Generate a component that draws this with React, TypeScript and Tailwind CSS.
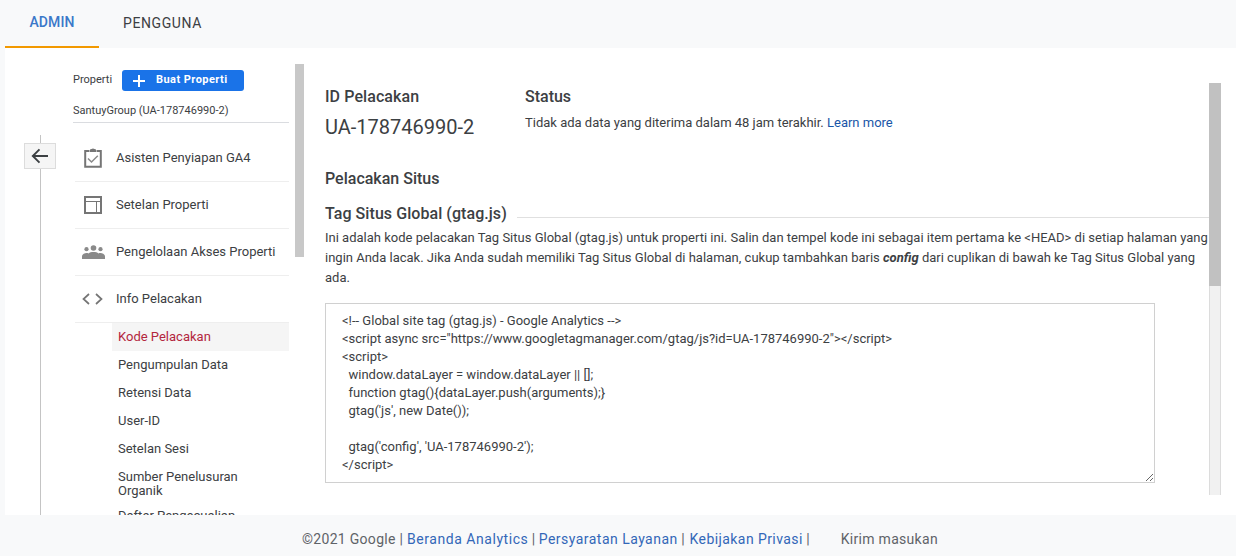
import React from "react";

function AssignIcon() {
  return (
    <svg width="18" height="20" viewBox="0 0 18 20" fill="none">
      <path d="M5.500 3H1.200v15.800h15.600V3h-4.300" stroke="#757575" strokeWidth="2" />
      <path d="M6 1.500l3-1 3 1v2.600H6z" fill="#757575" />
      <path d="M4 10.500l3.500 3.500 6.300-6.300" stroke="#8a8a8a" strokeWidth="1.500" />
    </svg>
  );
}
function LayoutIcon() {
  return (
    <svg width="18" height="18" viewBox="0 0 18 18" fill="none">
      <rect x="1" y="1" width="16" height="16" stroke="#757575" strokeWidth="2" />
      <path d="M1 5.500h16M12.500 5.500V17" stroke="#757575" strokeWidth="1" />
    </svg>
  );
}
function PeopleIcon() {
  return (
    <svg width="23" height="14" viewBox="0 0 23 14" fill="#8a8a8a" className="ml-[1px]">
      <circle cx="11.500" cy="3" r="2.800" />
      <circle cx="4.500" cy="4.200" r="2.100" />
      <circle cx="18.500" cy="4.200" r="2.100" />
      <path d="M0 14v-2.500C0 9.500 2.500 8 4.500 8c.8 0 1.500.1 2 .4C7.600 7.500 9.500 7 11.500 7s3.900.5 5 1.400c.5-.3 1.200-.4 2-.4 2 0 4.500 1.500 4.500 3.500V14z" />
    </svg>
  );
}
function CodeIcon() {
  return (
    <svg width="21" height="12" viewBox="0 0 21 12" fill="none" stroke="#757575" strokeWidth="1.700">
      <path d="M7 1L1.500 6 7 11M14 1l5.500 5-5.500 5" />
    </svg>
  );
}

const menu = [
  { label: "Asisten Penyiapan GA4", icon: <AssignIcon /> },
  { label: "Setelan Properti", icon: <LayoutIcon /> },
  { label: "Pengelolaan Akses Properti", icon: <PeopleIcon /> },
  { label: "Info Pelacakan", icon: <CodeIcon /> },
];

const sub = ["Pengumpulan Data", "Retensi Data", "User-ID", "Setelan Sesi"];

const code = `<!-- Global site tag (gtag.js) - Google Analytics -->
<script async src="https://www.googletagmanager.com/gtag/js?id=UA-178746990-2"></script>
<script>
  window.dataLayer = window.dataLayer || [];
  function gtag(){dataLayer.push(arguments);}
  gtag('js', new Date());

  gtag('config', 'UA-178746990-2');
</script>`;

export default function App() {
  return (
    <div className="w-[1236px] h-[556px] overflow-hidden bg-[#f8f9fa] flex flex-col font-['Roboto',sans-serif] text-[#3c4043]">
      {/* Tabs */}
      <div className="h-[48px] flex pl-[5px] shrink-0">
        <div className="w-[94px] h-[48px] border-b-2 border-[#f29900] flex items-center justify-center text-[14px] font-medium tracking-[0.1px] text-[#3b78c9] pb-[1px]">
          ADMIN
        </div>
        <div className="w-[126px] h-[48px] flex items-center justify-center pl-[1px] text-[14px] text-[#3c4043] pb-[2px] tracking-[0.6px]">
          PENGGUNA
        </div>
      </div>

      <div className="h-[467px] ml-[5px] bg-white flex shrink-0 overflow-hidden">
        {/* Gutter */}
        <div className="w-[68px] shrink-0 flex flex-col items-center pl-[2px] pt-[87px]">
          <div className="w-px h-[8px] bg-[#c4c4c4]" />
          <div className="w-[32px] h-[26px] shrink-0 bg-[#f5f5f5] border border-[#dcdcdc] flex items-center justify-center">
            <svg width="18" height="16" viewBox="0 0 18 16" fill="none" stroke="#3c4043" strokeWidth="1.900">
              <path d="M17 8H2M8.500 1.300L1.800 8l6.700 6.700" />
            </svg>
          </div>
          <div className="w-px flex-1 bg-[#c4c4c4]" />
        </div>

        {/* Sidebar */}
        <div className="w-[216px] shrink-0 overflow-hidden">
          <div className="h-[56px] pt-[22px] flex items-start">
            <span className="text-[11px] leading-[19px] text-[#3c4043] w-[49px]">Properti</span>
            <div className="w-[122px] h-[21px] bg-[#1a73e8] rounded-[3px] flex items-center text-white text-[11px] font-bold tracking-[0.45px] pl-[10px]">
              <svg width="14" height="14" viewBox="0 0 14 14" stroke="white" strokeWidth="2" className="mr-[10px]">
                <path d="M7 1v12M1 7h12" />
              </svg>
              Buat Properti
            </div>
          </div>
          <div className="text-[11px] leading-[14px] text-[#3c4043] border-b border-[#dadce0] pb-[4px]">
            SantuyGroup (UA-178746990-2)
          </div>

          <div className="mt-[12px] ml-[2px]">
            {menu.map((m) => (
              <div key={m.label} className="h-[47px] border-b border-[#eeeeee] flex items-center">
                <div className="w-[41px] flex justify-center pr-[6px] shrink-0">{m.icon}</div>
                <span className="text-[13px] text-[#3c4043]">{m.label}</span>
              </div>
            ))}
          </div>

          <div className="ml-[39px]">
            <div className="h-[28px] bg-[#f5f5f5] flex items-center pl-[6px] text-[13px] text-[#b3263d]">
              Kode Pelacakan
            </div>
            {sub.map((s) => (
              <div key={s} className="h-[28px] flex items-center pl-[6px] text-[13px] text-[#3c4043]">
                {s}
              </div>
            ))}
            <div className="pl-[6px] pt-[7px] text-[13px] leading-[14px] text-[#3c4043] w-[160px]">
              Sumber Penelusuran Organik
            </div>
            <div className="pl-[6px] pt-[11px] text-[13px] leading-[14px] text-[#3c4043]">
              Daftar Pengecualian
            </div>
          </div>
        </div>

        {/* Sidebar scrollbar */}
        <div className="w-[6px] shrink-0" />
        <div className="w-[9px] h-[193px] mt-[16px] bg-[#c8c8c8] shrink-0" />

        {/* Content */}
        <div className="w-[905px] shrink-0 pl-[21px] pt-[39px]">
          <div className="flex h-[78px]">
            <div className="w-[200px]">
              <div className="text-[16px] leading-[19px] font-medium tracking-[0.08px] text-[#3c4043]">ID Pelacakan</div>
              <div className="text-[20px] leading-[24px] mt-[9px] text-[#3c4043]">UA-178746990-2</div>
            </div>
            <div>
              <div className="text-[16px] leading-[19px] font-medium text-[#3c4043]">Status</div>
              <div className="text-[13px] leading-[20px] mt-[7px] text-[#3c4043]">
                Tidak ada data yang diterima dalam 48 jam terakhir.{" "}
                <span className="text-[#1a56a8]">Learn more</span>
              </div>
            </div>
          </div>
          <div className="text-[16px] leading-[19px] font-medium text-[#3c4043] mt-[4px]">Pelacakan Situs</div>
          <div className="flex items-end mt-[16px] h-[19px]">
            <span className="text-[16px] leading-[19px] font-medium tracking-[0.06px] text-[#3c4043] whitespace-nowrap">Tag Situs Global (gtag.js)</span>
            <div className="flex-1 h-px bg-[#e0e0e0] ml-[10px] mb-[5px]" />
          </div>
          <p className="text-[13px] leading-[20px] text-[#3c4043] mt-[5px]">
            Ini adalah kode pelacakan Tag Situs Global (gtag.js) untuk properti ini. Salin dan tempel kode ini sebagai item pertama ke &lt;HEAD&gt; di setiap halaman yang ingin Anda lacak. Jika Anda sudah memiliki Tag Situs Global di halaman, cukup tambahkan baris{" "}
            <b className="italic font-bold">config</b> dari cuplikan di bawah ke Tag Situs Global yang ada.
          </p>
          <textarea
            readOnly
            defaultValue={code}
            className="block mt-[15px] w-[830px] h-[180px] border border-[#d0d0d0] outline-none pl-[16px] pt-[8px] text-[13px] leading-[18px] font-['Roboto',sans-serif] text-[#3c4043] bg-white overflow-hidden"
          />
        </div>

        {/* Content scrollbar */}
        <div className="w-[12px] h-[412px] mt-[35px] shrink-0 flex flex-col bg-[#f1f1f1] border-x border-[#dcdcdc]">
          <div className="h-[203px] bg-[#c1c1c1] -mx-px" />
        </div>
      </div>

      {/* Footer */}
      <div className="flex-1 flex items-center pl-[302px] pt-[7px] text-[14px] text-[#5f6368]">
        <span className="tracking-[0.3px]">©2021 Google |&nbsp;</span>
        <span className="text-[#3367b8] tracking-[0.55px]">Beranda Analytics</span>
        <span>&nbsp;|&nbsp;</span>
        <span className="text-[#3367b8] tracking-[0.47px]">Persyaratan Layanan</span>
        <span>&nbsp;|&nbsp;&nbsp;</span>
        <span className="text-[#3367b8] tracking-[0.42px] -ml-[2px]">Kebijakan Privasi</span>
        <span>&nbsp;|</span>
        <span className="ml-[31px] tracking-[0.3px]">Kirim masukan</span>
      </div>
    </div>
  );
}
